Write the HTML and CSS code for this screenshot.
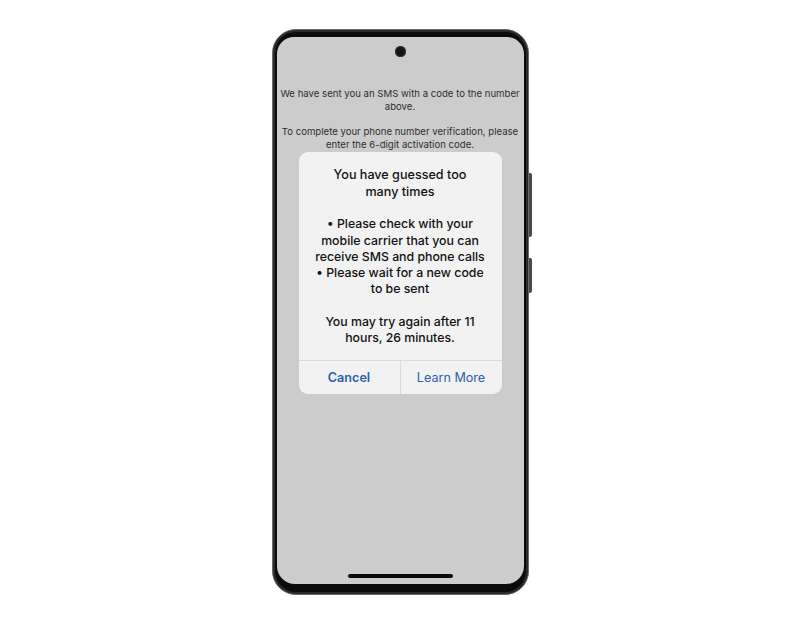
FILE: index.html
```html
<!DOCTYPE html>
<html lang="en">
<head>
  <meta charset="UTF-8" />
  <meta name="viewport" content="width=device-width, initial-scale=1.0"/>
  <title>Verification</title>
  <link rel="stylesheet" href="styles.css">
</head>
<body>
  <div class="phone">
    <div class="side-btn side-btn-long"></div>
    <div class="side-btn side-btn-short"></div>

    <div class="screen">
      <div class="camera"></div>

      <p class="info">We have sent you an SMS with a code to the number above.</p>
      <p class="info">To complete your phone number verification, please enter the 6-digit activation code.</p>

      <!-- alert sitting over the page -->
      <div class="alert">
        <div class="alert-body">
          <p class="alert-title">You have guessed too many times</p>
          <p class="gap">• Please check with your mobile carrier that you can receive SMS and phone calls<br>• Please wait for a new code to be sent</p>
          <p class="gap">You may try again after 11 hours, 26 minutes.</p>
        </div>
        <div class="alert-actions">
          <button class="primary">Cancel</button>
          <button>Learn More</button>
        </div>
      </div>

      <div class="home-bar"></div>
    </div>
  </div>
</body>
</html>
```

FILE: styles.css
```css
* {
  box-sizing: border-box;
  margin: 0;
  padding: 0;
}

body {
  background: #ffffff;
  font-family: Inter, 'Noto Sans', sans-serif;
}

/* Phone frame */
.phone {
  position: relative;
  width: 257px;
  height: 566px;
  margin: 29px auto 0;
  padding: 7px 4px 10px 4px;
  background: #0b0b0b;
  border: 1px solid #6a6a6a;
  border-radius: 24px;
  box-shadow: inset 0 0 0 2px #2a2a2a;
}

.side-btn {
  position: absolute;
  right: -4px;
  width: 3px;
  background: #4a4a4a;
  border-radius: 0 2px 2px 0;
}

.side-btn-long {
  top: 143px;
  height: 64px;
}

.side-btn-short {
  top: 228px;
  height: 35px;
}

.screen {
  position: relative;
  height: 100%;
  background: #cccccc;
  border-radius: 17px 17px 18px 18px;
  display: flex;
  flex-direction: column;
  align-items: center;
  padding: 9px 1px 0;
}

.camera {
  width: 11px;
  height: 11px;
  border-radius: 50%;
  background: #141414;
  box-shadow: 0 0 0 1px #3a3a3a inset;
  margin-bottom: 30px;
}

.info {
  font-size: 9.6px;
  line-height: 13px;
  color: #2e2e2e;
  text-align: center;
  margin-bottom: 12px;
}

/* Alert */
.alert {
  width: 203px;
  margin-top: -11px;
  background: #f2f2f2;
  border-radius: 9px;
  overflow: hidden;
}

.alert-body {
  padding: 14px 12px 14px;
  text-align: center;
  font-size: 12.3px;
  font-weight: 500;
  line-height: 16.25px;
  color: #111111;
}

.alert-title {
  max-width: 140px;
  margin: 0 auto;
  font-size: 12.6px;
  line-height: 17px;
}

.alert-body .gap {
  margin-top: 16.25px;
}

.alert-actions {
  display: flex;
  border-top: 1px solid #dadada;
}

.alert-actions button {
  flex: 1;
  height: 33px;
  background: none;
  border: none;
  font-family: inherit;
  font-size: 12.6px;
  color: #2d5fae;
}

.alert-actions button + button {
  border-left: 1px solid #dadada;
}

.alert-actions .primary {
  font-weight: 600;
}

.home-bar {
  margin-top: auto;
  margin-bottom: 6px;
  width: 105px;
  height: 4px;
  border-radius: 2px;
  background: #0a0a0a;
}
```
